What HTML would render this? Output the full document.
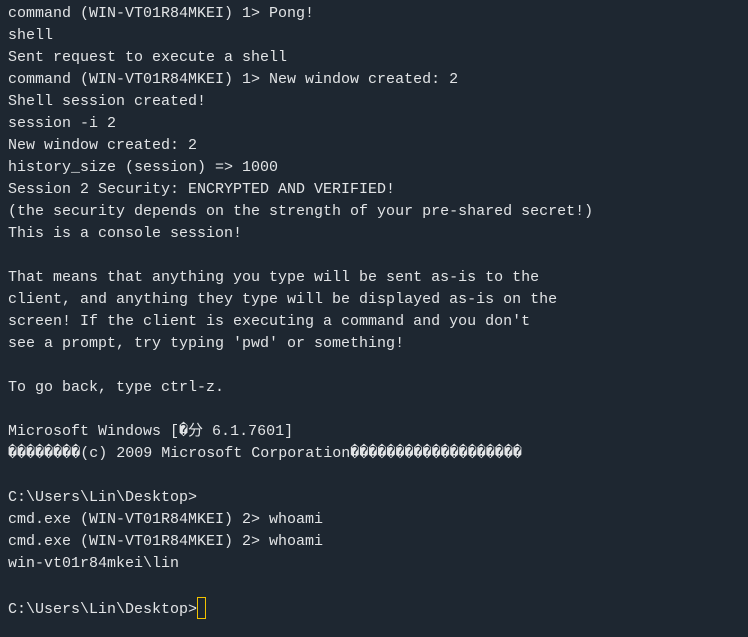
<!DOCTYPE html>
<html><head><meta charset="utf-8"><style>
html,body{margin:0;padding:0;background:#1e2731;width:748px;height:637px;overflow:hidden}
pre{margin:0;padding:3px 0 0 8px;font-family:"Liberation Mono","Noto Sans CJK SC",monospace;font-size:15px;line-height:22px;color:#e2e4e6;white-space:pre}
.cur{display:inline-block;width:7px;height:20px;border:1px solid #f2c200;vertical-align:-6px;margin-left:0}
</style></head><body><pre>command (WIN-VT01R84MKEI) 1&gt; Pong!
shell
Sent request to execute a shell
command (WIN-VT01R84MKEI) 1&gt; New window created: 2
Shell session created!
session -i 2
New window created: 2
history_size (session) =&gt; 1000
Session 2 Security: ENCRYPTED AND VERIFIED!
(the security depends on the strength of your pre-shared secret!)
This is a console session!

That means that anything you type will be sent as-is to the
client, and anything they type will be displayed as-is on the
screen! If the client is executing a command and you don't
see a prompt, try typing 'pwd' or something!

To go back, type ctrl-z.

Microsoft Windows [�分 6.1.7601]
��������(c) 2009 Microsoft Corporation�������������������

C:\Users\Lin\Desktop&gt;
cmd.exe (WIN-VT01R84MKEI) 2&gt; whoami
cmd.exe (WIN-VT01R84MKEI) 2&gt; whoami
win-vt01r84mkei\lin

C:\Users\Lin\Desktop&gt;<span class="cur"></span></pre></body></html>
